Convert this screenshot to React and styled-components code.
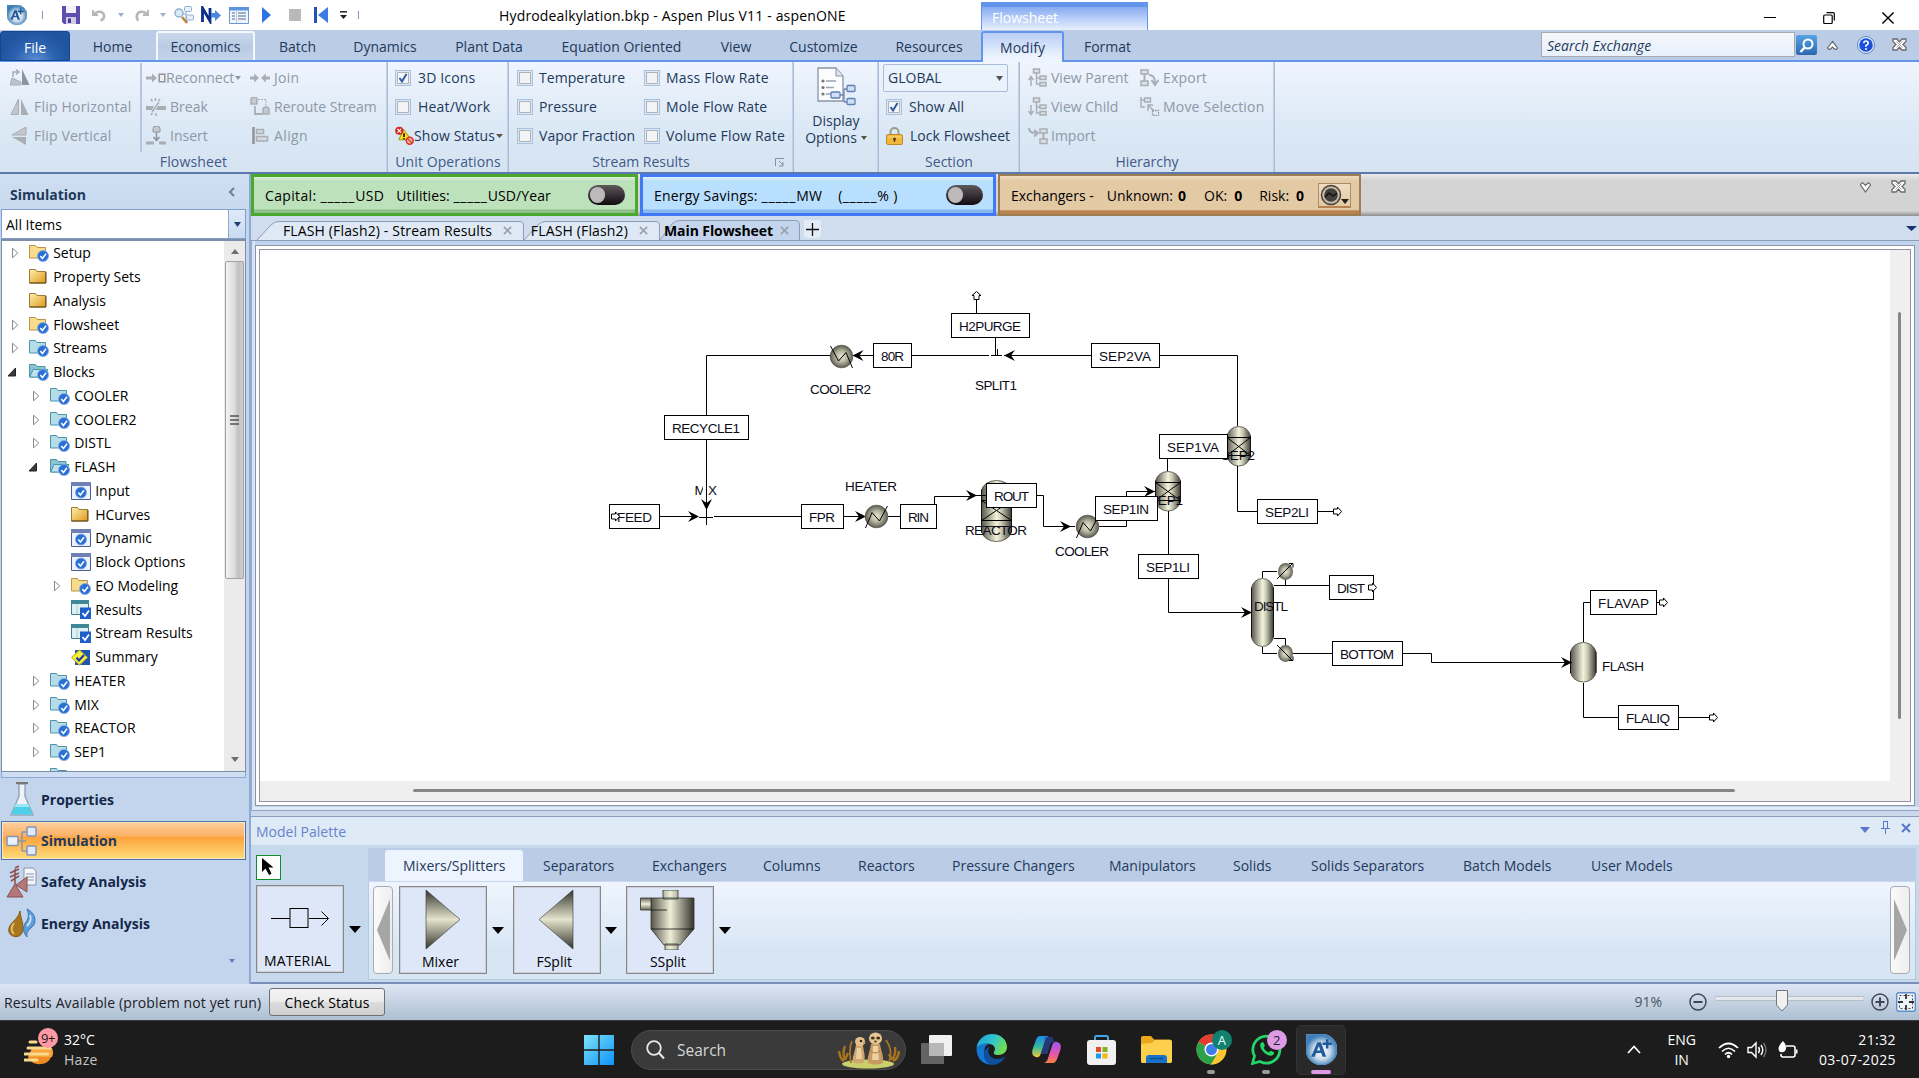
import React from "react";
import styled, { createGlobalStyle } from "styled-components";

const Global = createGlobalStyle`
  * { box-sizing: border-box; }
  body { margin: 0; background: #c3d5ed; overflow: hidden; }
  svg { display: block; flex: none; }
`;

const Window = styled.div`
  width: 1919px; height: 1078px; display: flex; flex-direction: column; overflow: hidden;
  font-family: "Open Sans", "Noto Sans", sans-serif; font-size: 14px; color: #000; white-space: nowrap;
  line-height: 20px;
`;
const Space = styled.div`flex: none; width: ${p => p.$w}px;`;
const Grow = styled.div`flex: 1;`;
const Label = styled.span`
  letter-spacing: ${p => p.$ls || 0}px;
  font-weight: ${p => (p.$bold ? 700 : 400)};
  color: ${p => p.$c || "inherit"};
`;

/* ---------- title bar ---------- */
const TitleBar = styled.div`height: 30px; background: #fff; display: flex; align-items: center; flex: none;`;
const QuickSlot = styled.div`width: ${p => p.$w}px; height: 30px; display: flex; align-items: center; flex: none;`;
const TitleText = styled.div`width: 482px; font-size: 14px; padding-top: 2px; letter-spacing: 0.16px;`;
const ContextTab = styled.div`
  width: 167px; height: 28px; align-self: flex-end; color: #fff; padding: 2px 0 0 10px;
  border-top: 5px solid #6495ed; border-left: 1px solid #6495ed; border-right: 1px solid #6495ed;
  background: linear-gradient(#87abf2, #e9f0fd); line-height: 18px; flex: none;
`;
const WinButton = styled.div`width: 59px; height: 30px; display: flex; align-items: center; justify-content: center; padding-top: 6px;`;

/* ---------- ribbon tabs ---------- */
const TabRow = styled.div`height: 32px; flex: none; background: #bbcde6; border-bottom: 2px solid #6495ed; display: flex; color: #1e395b;`;
const RibbonTab = styled.div`
  width: ${p => p.$w}px; height: 30px; margin-right: ${p => p.$mr || 0}px; flex: none;
  display: flex; align-items: center; justify-content: center; padding-top: 3px;
`;
const HoverTab = styled(RibbonTab)`
  margin-top: 1px; height: 29px; border: 2px solid #f4f7fb; border-bottom: 0; border-radius: 3px 3px 0 0;
  background: linear-gradient(#c9d7ea, #b9cbe4 50%, #c3d3ea); padding-top: 0;
`;
const FileTab = styled(RibbonTab)`
  margin-top: 1px; height: 30px; color: #fff; border: 1px solid #17468c; border-radius: 3px 3px 0 0;
  background: radial-gradient(ellipse at 50% 110%, #5f93d8 0, #2a61ae 45%, #1f549e 75%);
`;
const ActiveTab = styled(RibbonTab)`
  margin-top: 1px; height: 31px; border: 2px solid #6495ed; border-bottom: 0; border-radius: 3px 3px 0 0;
  background: linear-gradient(#b9cdf6, #eef4fd 85%); padding-top: 0; position: relative; z-index: 1;
`;
const SearchBox = styled.div`
  width: 254px; height: 25px; margin: 2px 1px 0 0; border: 1px solid #a9a9ab; background: linear-gradient(#f4f7fb, #e9f1fc);
  font-style: italic; padding: 3px 5px; color: #1e395b; flex: none;
`;
const SearchButton = styled.div`
  width: 21px; height: 20px; margin-top: 5px; background: linear-gradient(#56a4e4, #2c68ae); border-radius: 2px; flex: none;
  display: flex; align-items: center; justify-content: center;
`;
const TabRowIcon = styled.div`padding-top: 8px;`;

/* ---------- ribbon ---------- */
const Ribbon = styled.div`
  height: 112px; flex: none; display: flex; color: #1e395b;
  background: linear-gradient(#eff5fe, #dbe8f5 60%, #d6e3f1); border-bottom: 2px solid #5d78ab;
`;
const Group = styled.div`
  width: ${p => p.$w}px; height: 110px; flex: none; display: flex; flex-direction: column;
  border-right: 1px solid #a8bcda; box-shadow: inset -1px 0 #c3d1e5;
`;
const GroupBody = styled.div`height: 90px; display: flex; padding-top: 1px;`;
const GroupName = styled.div`
  height: 20px; line-height: 19px; color: #3e5a89; display: flex; justify-content: center; position: relative;
`;
const Column = styled.div`
  width: ${p => p.$w}px; display: flex; flex-direction: column; flex: none;
  padding-left: ${p => p.$pl || 0}px; color: ${p => (p.$dim ? "#8e98a6" : "#1e395b")};
  border-right: ${p => (p.$line ? "2px solid #b7c6de" : "0")}; letter-spacing: ${p => p.$ls || 0}px;
`;
const Command = styled.div`height: 29px; display: flex; align-items: center; gap: ${p => p.$gap ?? 4}px;`;
const CheckBox = styled.div`
  width: 16px; height: 16px; border: 1px solid #a9c0de; background: #dfe9f6; flex: none; padding: 1px;
  display: flex; > div { flex: 1; border: 1px solid #aeb3b9; background: #f1f3f5; }
`;
const SectionCombo = styled.div`
  width: 125px; height: 28px; border: 1px solid #abbdd6; background: #eaf2fb; display: flex; align-items: center;
  justify-content: space-between; padding: 0 4px 0 4px; margin: 1px 0 0 -3px; border-radius: 2px;
`;
const BigButton = styled.div`
  width: 86px; display: flex; flex-direction: column; align-items: center; padding-top: 4px; line-height: 17px;
`;
const BigLine = styled.div`display: flex; align-items: center; gap: 4px; margin-top: ${p => p.$mt || 0}px;`;
const Launcher = styled.div`position: absolute; right: 8px; top: 6px;`;

/* ---------- body ---------- */
const Body = styled.div`height: 810px; flex: none; display: flex;`;
const Side = styled.div`
  width: 251px; display: flex; flex-direction: column; background: #c3d5ed; border-right: 2px solid #8ea9d3; flex: none; padding-left: 1px;
`;
const SideTitle = styled.div`
  height: 35px; display: flex; align-items: center; justify-content: space-between; padding: 7px 13px 0 10px;
  background: linear-gradient(#cfdef1, #c9daf0); color: #1e395b; font-weight: 700; margin-left: -1px;
`;
const SideCombo = styled.div`
  width: 245px; height: 30px; border: 1px solid #7f9fce; background: #fff; display: flex; align-items: center; padding: 1px 0 0 4px;
`;
const ComboButton = styled.div`
  width: 17px; height: 28px; background: linear-gradient(#dfeaf7, #c9daf0); border-left: 1px solid #8ba8d2;
  display: flex; align-items: center; justify-content: center; margin: -1px 0 0 auto;
`;
const TreeBox = styled.div`
  width: 245px; height: 533px; border: 1px solid #7d8da8; border-top-width: 2px; background: #fff; display: flex; overflow: hidden;
`;
const TreeList = styled.div`flex: 1; padding-top: 0.5px;`;
const TreeRow = styled.div`
  height: 23.76px; display: flex; align-items: center; padding-left: ${p => 4 + p.$level * 21}px;
`;
const Twisty = styled.div`width: 23px; flex: none;`;
const TreeIcon = styled.div`width: 24.2px; flex: none;`;
const ScrollBar = styled.div`
  width: 21px; background: #ebebeb; display: flex; flex-direction: column; align-items: center; justify-content: space-between;
`;
const ScrollEnd = styled.div`height: ${p => p.$h}px; display: flex; align-items: center;`;
const ScrollThumb = styled.div`
  width: 19px; height: 318px; border: 1px solid #a0a0a0; border-radius: 2px; margin-bottom: auto;
  background: linear-gradient(90deg, #f4f4f4, #dcdcde 50%, #bfc0c4 70%, #d0d0d4); display: flex; align-items: center; justify-content: center;
`;
const Splitter = styled.div`height: 6px; width: 245px; border: 1px solid #8ba8d2; border-top: 0; background: #cfdff3; margin-bottom: 1px;`;
const NavItem = styled.div`
  width: 245px; height: ${p => p.$h}px; display: flex; align-items: center; font-weight: 700; color: #14284a; gap: 4px; padding-left: 5px;
`;
const NavActive = styled(NavItem)`
  border: 1px solid #4c72ab; box-shadow: inset 0 0 0 1px #fce5c5; color: #1e395b; padding-left: 4px;
  background: linear-gradient(#fdcf9f, #fcb064 38%, #fda33b 42%, #fedd7c);
`;
const NavFoot = styled.div`display: flex; justify-content: flex-end; padding: 15px 14px 0 0;`;

const Main = styled.div`flex: 1; display: flex; flex-direction: column; background: #cad9eb; min-width: 0;`;
const Dashboard = styled.div`
  height: 42px; display: flex; flex: none; background: linear-gradient(#ebebeb, #d4d4d4 15%, #d3d3d3 88%, #8d8d8d);
`;
const Meter = styled.div`
  width: ${p => p.$w}px; height: 42px; margin-right: ${p => p.$mr}px; border: ${p => p.$b}px solid ${p => p.$line};
  background: linear-gradient(${p => p.$top}, ${p => p.$fill} 12%, ${p => p.$fill} 88%, ${p => p.$low} 92%);
  display: flex; align-items: center; flex: none; > span { padding-top: 2px; }
`;
const Toggle = styled.div`
  width: 37px; height: 20px; border-radius: 10px; background: linear-gradient(#5d585c, #120b10); padding: 2px;
  &::before { content: ""; display: block; width: 15px; height: 16px; border-radius: 8px; background: #bdb9bb; }
`;
const ExchangerButton = styled.div`
  width: 33px; height: 25px; border: 1px solid #a98c68; border-bottom: 2px solid #b98350; display: flex; align-items: center;
  background: linear-gradient(#efdcc2, #e3c9a5);
`;
const DashIcons = styled.div`margin-left: auto; display: flex; gap: 19px; padding: 6px 13px 0 0;`;

const DocTabs = styled.div`
  height: 25px; background: #d0ddee; display: flex; align-items: flex-end; border-bottom: 1px solid #8d9db8; flex: none;
`;
const DocTab = styled.div`
  height: 20px; width: ${p => p.$w}px; display: flex; align-items: center; justify-content: flex-end; gap: ${p => (p.$active ? 7 : 11)}px; flex: none;
  position: relative; padding: 1px ${p => p.$pr}px 0 0; font-weight: ${p => (p.$active ? 700 : 400)};
  > svg:first-child { position: absolute; left: 0; top: 0; }
  > * { position: relative; }
`;
const AddTab = styled.div`
  width: 17px; height: 18px; margin: 0 0 2px 4px; border-radius: 3px; background: #e4edf7; display: flex; align-items: center; justify-content: center;
`;
const TabMenu = styled.div`padding: 0 2px 9px 0;`;
const DocFrame = styled.div`
  height: 570px; flex: none; background: #bfd5f0; border-bottom: 1px solid #8fa3c4; border-left: 1px solid #9aabc8;
  padding: 4px 4px 4px 3px; box-shadow: inset 0 -3px #dfeaf6, inset 3px 0 #d6e4f5;
`;
const DocEdge = styled.div`height: 561px; border: 1px solid #8d95a3; background: #fff; padding: 3px;`;
const Canvas = styled.div`
  height: 553px; border: 1px solid #8d95a3; background: #efefef; display: grid; grid-template-columns: 1630px 20px; grid-template-rows: 531px 20px;
`;
const Sheet = styled.div`background: #fff;`;
const VBar = styled.div`padding: 62px 0 0 8px; &::before { content: ""; display: block; width: 3px; height: 407px; background: #868686; border-radius: 2px; }`;
const HBar = styled.div`padding: 8px 0 0 153px; &::before { content: ""; display: block; width: 1322px; height: 3px; background: #868686; border-radius: 2px; }`;

/* ---------- palette ---------- */
const Palette = styled.div`
  flex: 1; margin-top: 5px; border-top: 1px solid #8d9db8; border-bottom: 2px solid #7890b8; background: #c6d8ec; display: flex; flex-direction: column;
`;
const PaletteHead = styled.div`
  height: 28px; background: #deeaf6; color: #6a83cc; display: flex; align-items: center; justify-content: space-between; padding: 2px 8px 0 5px;
`;
const PaletteTools = styled.div`display: flex; gap: 11px; padding-bottom: 9px; align-items: center;`;
const ToolDrop = styled.div`padding-top: 5px;`;
const PaletteBody = styled.div`display: flex; padding-top: 3px; flex: 1;`;
const PaletteLeft = styled.div`width: 117px; padding: 7px 0 0 5px; flex: none;`;
const CursorButton = styled.div`
  width: 25px; height: 25px; border: 1px solid #138a2c; background: #fdfdfd; display: flex; align-items: center; justify-content: center; margin-bottom: 5px;
`;
const PaletteRight = styled.div`width: 1548px; flex: none;`;
const PaletteTabs = styled.div`height: 33px; background: #bbcde6; display: flex; padding: 2px 0 0 17px; color: #1e395b;`;
const PaletteTab = styled.div`
  width: ${p => p.$w}px; height: 31px; padding: 6px 0 0 18px; margin-right: ${p => (p.$active ? 2 : 0)}px; flex: none;
  background: ${p => (p.$active ? "#eef4fd" : "none")}; border-radius: 3px 3px 0 0;
`;
const PalettePane = styled.div`
  height: 99px; border: 1px solid #b7c9de; border-top: 1px solid #c9d8ec; background: linear-gradient(#eff5fe, #d8e6f4 70%, #d8e5f3);
  display: flex; padding: 4px 5px 0 4px;
`;
const Unit = styled.div`display: flex; align-items: center; width: ${p => p.$w}px; height: 88px; flex: none;`;
const UnitBox = styled.div`
  width: 88px; height: 88px; border: 1px solid #85878c; box-shadow: inset 0 0 0 1px #cfd0d4; background: #dee7f8;
  display: flex; flex-direction: column; align-items: center; justify-content: space-between; padding: ${p => p.$pt ?? 4}px 5px 1px 0; flex: none;
`;
const Pager = styled.div`
  width: 20px; height: 88px; border: 1px solid #a7abb2; border-radius: 4px; background: linear-gradient(90deg, #fafafa, #eeeeee);
  display: flex; align-items: center; justify-content: center; margin-right: ${p => p.$mr || 0}px; margin-left: ${p => (p.$end ? "auto" : 0)}; flex: none;
`;

/* ---------- status bar + taskbar ---------- */
const Status = styled.div`
  height: 36px; flex: none; display: flex; align-items: center; background: linear-gradient(#dde6f4, #adbfd3); padding-left: 4px; color: #1b2027;
`;
const StatusText = styled.div`width: 265px; letter-spacing: 0.13px; padding-top: 1px;`;
const StatusButton = styled.div`
  width: 116px; height: 28px; border: 1px solid #707070; border-radius: 3px; background: linear-gradient(#f3f3f3, #ebebeb 50%, #dcdcdc 51%, #cfcfcf);
  text-align: center; line-height: 27px; color: #000; flex: none; letter-spacing: 0.1px;
`;
const Slider = styled.div`width: 149px; height: 24px; flex: none;`;
const Taskbar = styled.div`
  height: 58px; flex: none; background: #1c1c1c; border-top: 1px solid #3a3a3a; display: flex; color: #fff; align-items: center;
`;
const Weather = styled.div`display: flex; gap: 10px; padding-left: 24px; width: 584px; line-height: 20px; flex: none; small { font-size: 14px; letter-spacing: 0.3px; color: #c4c4c4; display: block; }`;
const SearchPill = styled.div`
  width: 275px; height: 40px; border-radius: 20px; background: #3a3a3a; border: 1px solid #4c4c4c; margin-left: 17px; padding: 0 5px 0 14px;
  display: flex; align-items: center; color: #d6d6d6; font-size: 15.5px; gap: 12px; flex: none;
`;
const TaskButton = styled.div`width: 55px; height: 56px; display: flex; align-items: center; justify-content: center; flex: none; position: relative;`;
const Badge = styled.div`
  position: absolute; left: ${p => p.$x}px; top: ${p => p.$y}px; width: 20px; height: 20px; border-radius: 50%; background: ${p => p.$bg};
  color: ${p => p.$fg}; font-size: 13px; line-height: 20px; text-align: center; letter-spacing: -0.5px;
`;
const Dot = styled.div`position: absolute; bottom: 4px; width: ${p => p.$w || 8}px; height: 4px; border-radius: 2px; background: ${p => p.$bg || "#9a9a9a"};`;
const ActiveTile = styled.div`
  width: 50px; height: 50px; border-radius: 5px; background: #292929; border: 1px solid #333; display: flex; align-items: center; justify-content: center;
`;
const Tray = styled.div`margin-left: auto; display: flex; align-items: center; padding-right: 23px; font-size: 14px;`;
const TwoLine = styled.div`text-align: ${p => p.$align}; line-height: 20px; letter-spacing: ${p => p.$ls || 0}px;`;
const Relative = styled.div`position: relative;`;

/* ---------- small drawings ---------- */
const Caret = ({ c = "#000", w = 8, h = 5 }) => (
  <svg width={w} height={h} viewBox="0 0 8 5" preserveAspectRatio="none"><path d="M0 0h8L4 5z" fill={c} /></svg>
);
const Cross = ({ c = "#9aa0a8", s = 9, k = 1.8 }) => (
  <svg width={s} height={s} viewBox="0 0 10 10"><path d="M1 1l8 8M9 1L1 9" stroke={c} strokeWidth={k} fill="none" /></svg>
);
const OutlinedX = () => (
  <svg width="15" height="13" viewBox="0 0 15 13">
    <path d="M1 1h4l2.500 2.800L10 1h4v2.500L11 6.500l3 3V12h-4L7.500 9.200 5 12H1V9.500l3-3-3-3z" fill="#fff" stroke="#6a6a6a" strokeWidth="1.300" />
    <path d="M4.500 3.500l6 6M10.500 3.500l-6 6" stroke="#8a8a8a" strokeWidth=".8" />
  </svg>
);
const AspenLogo = ({ s }) => (
  <svg width={s} height={s} viewBox="0 0 30 30">
    <defs><radialGradient id="asp" cx=".5" cy=".55"><stop offset="0" stopColor="#fff" /><stop offset=".55" stopColor="#c9d9ea" /><stop offset="1" stopColor="#3f7fb8" /></radialGradient></defs>
    <path d="M0 0h15A15 15 0 1 1 0 15z" fill="url(#asp)" stroke="#5c93c4" strokeWidth="1" />
    <path d="M5 22L11 8h3.500l5 14h-3.500l-1.200-3.500H9.700L8.500 22zM10.600 16h3.300l-1.500-4.500z" fill="#215a9c" fillRule="evenodd" />
    <path d="M20.500 5v9M16 9.500h9" stroke="#215a9c" strokeWidth="2.400" />
  </svg>
);
const quick = {
  save: <svg width="18" height="18" viewBox="0 0 18 18"><path d="M0 0h18v18H2l-2-2z" fill="#5d4fb0" /><path d="M4 0h10v7H4z" fill="#f2f0fa" /><path d="M4 11h10v7H4z" fill="#cfcbe6" /><path d="M6 12.500h3V17H6z" fill="#443a90" /></svg>,
  undo: <svg width="15" height="15" viewBox="0 0 15 15"><path d="M1 2v5h5" fill="none" stroke="#b5b9be" strokeWidth="2" /><path d="M2 6.500C5 2.500 11 3 12 7c.6 2.600-1 4.500-3.500 5.500" fill="none" stroke="#b5b9be" strokeWidth="2.600" /></svg>,
  redo: <svg width="15" height="15" viewBox="0 0 15 15"><path d="M14 2v5H9" fill="none" stroke="#b5b9be" strokeWidth="2" /><path d="M13 6.500C10 2.500 4 3 3 7c-.6 2.600 0 4.500 1.500 5.500" fill="none" stroke="#b5b9be" strokeWidth="2.600" /></svg>,
  find: <svg width="20" height="20" viewBox="0 0 20 20"><path d="M8 9h4M12 4v12M12 4h2M12 16h2" stroke="#8aa6c6" fill="none" /><rect x="10.500" y="1.500" width="7" height="5" rx="1" fill="#e8f1fa" stroke="#8fb0d2" /><rect x="12.500" y="10" width="7" height="5" rx="1" fill="#e8f1fa" stroke="#8fb0d2" /><circle cx="5" cy="8" r="4" fill="#dbeaf7" stroke="#8fb0d2" strokeWidth="1.500" /><path d="M8 12l5 6" stroke="#b8833c" strokeWidth="2.400" /></svg>,
  next: <svg width="20" height="18" viewBox="0 0 20 18"><path d="M1.500 16V2l7.500 13V2" fill="none" stroke="#0c2f8c" strokeWidth="2.800" /><path d="M10 7h4V4l6 5.500-6 5.500v-3.500h-4z" fill="#4a86e0" /></svg>,
  form: <svg width="20" height="17" viewBox="0 0 20 17"><path d="M.5.5h19v16H.5z" fill="#f0f5fb" stroke="#6e97cf" /><path d="M0 0h20v3.500H0z" fill="#5c92e0" /><path d="M3 6h3M3 9h3M3 12h3M9 6h8M9 9h8M9 12h8" stroke="#8499b5" strokeWidth="1.500" /><path d="M7.500 4v12" stroke="#b4c5dc" /></svg>,
  play: <svg width="9" height="16" viewBox="0 0 9 16"><path d="M0 0l9 8-9 8z" fill="#2e74e0" /></svg>,
  stop: <svg width="12" height="12" viewBox="0 0 12 12"><path d="M0 0h12v12H0z" fill="#b9b9b9" /></svg>,
  rewind: <svg width="14" height="16" viewBox="0 0 14 16"><path d="M0 0h3v16H0z" fill="#2452b4" /><path d="M14 0v16L4 8z" fill="#3c7be2" /></svg>,
  more: <svg width="7" height="9" viewBox="0 0 7 9"><path d="M0 .8h7" stroke="#222" strokeWidth="1.500" /><path d="M0 4h7L3.500 8z" fill="#222" /></svg>,
};
const G = "#a9aeb5", GD = "#8f959d";
const cmdIcon = {
  rotate: <svg width="20" height="17" viewBox="0 0 20 17"><path d="M12 0v16h7.500z" fill={GD} /><path d="M0 16h11v-3L2 9z" fill="#bfc4ca" stroke={G} /><path d="M3 8V3h5M6 .5L9 3 6 5.500" fill="none" stroke={G} strokeWidth="1.500" /></svg>,
  fliph: <svg width="20" height="16" viewBox="0 0 20 16"><path d="M8.500 0v15.500H1z" fill="#c3c7cc" stroke={G} /><path d="M11 0v16h7.500z" fill={G} /></svg>,
  flipv: <svg width="20" height="18" viewBox="0 0 20 18"><path d="M16 0v8H2z" fill="#c3c7cc" stroke={G} /><path d="M16 10v8L2 10z" fill={G} /></svg>,
  reconnect: <svg width="20" height="12" viewBox="0 0 20 12"><path d="M0 4.500h6V1.500L11 6l-5 4.500v-3H0z" fill={G} /><rect x="13.200" y="2.200" width="5.600" height="7.600" fill="#eee" stroke={GD} strokeWidth="1.500" /></svg>,
  brk: <svg width="20" height="18" viewBox="0 0 20 18"><path d="M0 8h8l-2 4H0zM12 8h8v4H9.500z" fill={G} /><path d="M6 14L13 4M5 1l1.500 2.500M9.500 0v3M14 1l-1.500 2M5 17l1.500-2M10 18v-3" stroke={G} strokeWidth="1.500" /></svg>,
  insert: <svg width="20" height="19" viewBox="0 0 20 19"><path d="M7 6V2.500a3.500 2.500 0 0 1 7 0V6z" fill="#c7cacf" stroke={GD} /><path d="M10.500 6v8M7.500 11l3 3.500 3-3.500" fill="none" stroke={GD} strokeWidth="1.500" /><path d="M0 15.500h8v3H0zM13 15.500h7v3h-7z" fill={G} /></svg>,
  join: <svg width="20" height="12" viewBox="0 0 20 12"><path d="M0 4.500h4V1.500L9 6l-5 4.500v-3H0zM20 4.500h-4V1.500L11 6l5 4.500v-3h4z" fill={G} /></svg>,
  reroute: <svg width="20" height="19" viewBox="0 0 20 19"><path d="M1 7V3a3 3 0 0 1 6 0v4zM13 17v-4a3 3 0 0 1 6 0v4z" fill="#c7cacf" stroke={G} strokeWidth="1.500" /><path d="M8 2.500h8v7" fill="none" stroke={G} strokeDasharray="2 1" /><path d="M5 9v8h7" fill="none" stroke={G} strokeWidth="1.800" /></svg>,
  align: <svg width="20" height="17" viewBox="0 0 20 17"><path d="M3.500 0v17" stroke={GD} strokeWidth="2.500" /><path d="M6.500 2.500h7v4h-7zM6.500 9.500h11v4.500h-11z" fill="#d5d8dc" stroke={G} strokeWidth="1.500" /></svg>,
  parent: <svg width="20" height="19" viewBox="0 0 20 19"><path d="M5.500 1h6v4h-6zM12 8h6v3.500h-6zM12 14.500h6V18h-6z" fill="#dcdfe3" stroke={G} strokeWidth="1.500" /><path d="M8.500 5v11H12M8.500 10H12M3 18V9M.5 12L3 8.500 5.500 12" fill="none" stroke={G} strokeWidth="1.500" /></svg>,
  child: <svg width="20" height="19" viewBox="0 0 20 19"><path d="M5.500 1h6v4h-6zM12 8h6v3.500h-6zM12 14.500h6V18h-6z" fill="#dcdfe3" stroke={G} strokeWidth="1.500" /><path d="M8.500 5v11H12M8.500 10H12M3 8v9M.5 14L3 17.500 5.500 14" fill="none" stroke={G} strokeWidth="1.500" /></svg>,
  imp: <svg width="20" height="18" viewBox="0 0 20 18"><path d="M12 2h7v4h-7zM12 12h7v4.500h-7z" fill="#dcdfe3" stroke={G} strokeWidth="1.500" /><path d="M15.500 6v6M1 1c0 4 3 5 7 5M6 3l4 3-4 3.500" fill="none" stroke={G} strokeWidth="2" /></svg>,
  exp: <svg width="20" height="18" viewBox="0 0 20 18"><path d="M1 1h7v4H1zM1 12h7v4.500H1z" fill="#dcdfe3" stroke={G} strokeWidth="1.500" /><path d="M4.500 5v7M9 6c5 0 6 3 6 8M11.500 11l3.500 5 3.500-5" fill="none" stroke={G} strokeWidth="2" /></svg>,
  move: <svg width="20" height="19" viewBox="0 0 20 19"><path d="M4.500 1h6v4h-6z" fill="#dcdfe3" stroke={G} strokeWidth="1.300" /><path d="M1 0v10h4M1 3h3M8 14V8h5M8 8l6 6" fill="none" stroke={G} strokeWidth="1.500" /><path d="M12.500 13.500h6v5h-6z" fill="none" stroke={GD} strokeDasharray="1.500 1" strokeWidth="1.300" /></svg>,
  status: <svg width="19" height="20" viewBox="0 0 20 20"><path d="M9 3l8 11H4z" fill="#f7e01c" stroke="#a08a00" /><path d="M9.500 7v4M9.500 12v1.500" stroke="#000" strokeWidth="1.600" /><circle cx="4.500" cy="4.500" r="4.300" fill="#d8231f" /><path d="M2.500 2.500l4 4M6.500 2.500l-4 4" stroke="#fff" strokeWidth="1.300" /><circle cx="15.500" cy="15" r="3.600" fill="#f6b8a8" stroke="#d8321f" strokeWidth="1.600" /><path d="M13 12.500l5 5" stroke="#d8321f" strokeWidth="1.400" /></svg>,
  lock: <svg width="17" height="18" viewBox="0 0 17 18"><path d="M4.500 8V5a4 4 0 0 1 8 0v3" fill="none" stroke="#9c9c8e" strokeWidth="2" /><rect x=".5" y="7.500" width="16" height="10" rx="1.500" fill="#f0b73a" stroke="#c08a2a" /><path d="M1.500 10h14" stroke="#fbdc8a" /><circle cx="8.500" cy="12" r="1.500" fill="#5a3d08" /><path d="M8.500 12v3" stroke="#5a3d08" strokeWidth="1.300" /></svg>,
  display: <svg width="39" height="39" viewBox="0 0 39 39"><path d="M1 1h18l7 8v25H1z" fill="#fbfcfe" stroke="#8a94a3" strokeWidth="1.300" /><path d="M19 1v8h7" fill="#dfe5ee" stroke="#8a94a3" /><circle cx="6" cy="14" r="1.600" fill="#777" /><circle cx="6" cy="20.500" r="1.600" fill="#777" /><circle cx="6" cy="27" r="1.600" fill="#777" /><path d="M9 14h10M9 20.500h8M9 27h5" stroke="#9ba3ae" strokeWidth="1.500" /><path d="M22 28h5M27 22v13M27 22h3M27 35h3" stroke="#7288a8" strokeWidth="1.300" fill="none" /><rect x="14" y="25" width="9" height="6" rx="1" fill="#cfe0f6" stroke="#5d7fb4" strokeWidth="1.300" /><rect x="30" y="18.500" width="8" height="6" rx="1" fill="#cfe0f6" stroke="#5d7fb4" strokeWidth="1.300" /><rect x="30" y="31.500" width="8" height="6" rx="1" fill="#cfe0f6" stroke="#5d7fb4" strokeWidth="1.300" /></svg>,
};
const Check = ({ on }) => (
  <CheckBox>{on ? <svg width="12" height="12" viewBox="0 0 12 12"><path d="M.5.5h11v11H.5z" fill="#f4f7fa" stroke="#aeb3b9" /><path d="M2.500 6l2.500 3.500L9.500 2" fill="none" stroke="#2f5aa0" strokeWidth="2" /></svg> : <div />}</CheckBox>
);

const Tick = ({ x = 14, y = 12 }) => (
  <g transform={`translate(${x} ${y})`}><circle r="5.500" fill="#2a6fd6" stroke="#7fa8e4" strokeWidth=".8" /><path d="M-2.700 0L-.6 2.500 3-2.300" fill="none" stroke="#fff" strokeWidth="1.500" /></g>
);
const treeIcons = {
  yc: <svg width="20" height="18" viewBox="0 0 20 18"><path d="M.5 1.500h6l1.500 2h8.500V14H.5z" fill="#f6dd8d" stroke="#b99647" /><Tick /></svg>,
  y: <svg width="20" height="18" viewBox="0 0 20 18"><defs><linearGradient id="fy" x2="1" y2="1"><stop offset="0" stopColor="#fdf0b0" /><stop offset="1" stopColor="#e0991c" /></linearGradient></defs><path d="M.5 1.500h6l1.500 2h8.500V15H.5z" fill="url(#fy)" stroke="#9c7c33" /><path d="M.5 15h16.500V4" fill="none" stroke="#5e4514" /></svg>,
  bc: <svg width="20" height="18" viewBox="0 0 20 18"><path d="M.5 1.500h6l1.500 2h8.500V14H.5z" fill="#b5dde8" stroke="#4d94ab" /><Tick /></svg>,
  bo: <svg width="20" height="18" viewBox="0 0 20 18"><path d="M.5 1.500h6l1.500 2h8V14H.5z" fill="#8cc3d4" stroke="#4d94ab" /><path d="M4 6.500h15L15 14H.8z" fill="#bfe3ec" stroke="#4d94ab" /><Tick /></svg>,
  f: <svg width="20" height="18" viewBox="0 0 20 18"><path d="M.5.500h19v17H.5z" fill="#eef1fb" stroke="#4a5f92" /><path d="M0 0h20v4H0z" fill="#6f80b4" /><Tick x={10} y={10.500} /></svg>,
  r: <svg width="20" height="19" viewBox="0 0 20 19"><path d="M.5.500h17v14H.5z" fill="#dff0f3" stroke="#3d8393" /><path d="M0 0h18v4H0z" fill="#3d8796" /><path d="M6 4v10" stroke="#a9ced6" /><path d="M9 7.500h11V19H9z" fill="#1e5fca" /><path d="M11.500 13l2.500 3 4-5.500" fill="none" stroke="#fff" strokeWidth="1.700" /></svg>,
  s: <svg width="20" height="17" viewBox="0 0 20 17"><path d="M4 1h15v15H4z" fill="#1f57b4" /><path d="M8.500 1l8 7.500-8 7.500-8-7.500z" fill="#f8ee3c" stroke="#b9a80e" /><path d="M5.500 8.500l2.500 3 5-5.500" fill="none" stroke="#1436b0" strokeWidth="2" /></svg>,
};
const TW = {
  closed: <svg width="18" height="14" viewBox="0 0 18 14"><path d="M6.500 2.200v9.600L11.800 7z" fill="#fff" stroke="#8a8a8a" /></svg>,
  open: <svg width="18" height="14" viewBox="0 0 18 14"><path d="M9.500 3v8H2z" fill="#3a3a3a" stroke="#222" /></svg>,
};
const tree = [
  [0, "closed", "yc", "Setup"], [0, "", "y", "Property Sets"], [0, "", "y", "Analysis"], [0, "closed", "yc", "Flowsheet"],
  [0, "closed", "bc", "Streams"], [0, "open", "bo", "Blocks"], [1, "closed", "bc", "COOLER"], [1, "closed", "bc", "COOLER2"],
  [1, "closed", "bc", "DISTL"], [1, "open", "bo", "FLASH"], [2, "", "f", "Input"], [2, "", "y", "HCurves"], [2, "", "f", "Dynamic"],
  [2, "", "f", "Block Options"], [2, "closed", "yc", "EO Modeling"], [2, "", "r", "Results"], [2, "", "r", "Stream Results"],
  [2, "", "s", "Summary"], [1, "closed", "bc", "HEATER"], [1, "closed", "bc", "MIX"], [1, "closed", "bc", "REACTOR"],
  [1, "closed", "bc", "SEP1"], [1, "", "bc", ""],
];
const navIcons = [
  <svg width="31" height="36" viewBox="0 0 31 36"><path d="M11 2h10M13 2v12L5 33h22L19 14V2" fill="#eef3f8" stroke="#9aa7b8" strokeWidth="1.500" /><path d="M9.500 22h13l4 10.500h-21z" fill="#4fd0ea" /><path d="M9.500 22h13l1 3h-15z" fill="#9be7f5" /><path d="M10 1h12" stroke="#777" strokeWidth="2" /></svg>,
  <svg width="31" height="32" viewBox="0 0 31 32"><path d="M12 16h8M16 7v19M16 7h5M16 26h5" stroke="#8d96a8" strokeWidth="1.500" fill="none" /><rect x="1" y="11.500" width="11" height="9" rx="1" fill="#e9f1fd" stroke="#8294b8" strokeWidth="1.500" /><rect x="21" y="2" width="9" height="9" rx="1" fill="#dfeafc" stroke="#8294b8" strokeWidth="1.500" /><rect x="21" y="21" width="9" height="9" rx="1" fill="#dfeafc" stroke="#8294b8" strokeWidth="1.500" /></svg>,
  <svg width="31" height="34" viewBox="0 0 31 34"><path d="M18 3h9l3 3v14H18z" fill="#f3f6fa" stroke="#8793a5" /><path d="M20 9h8M20 12h8M20 15h8" stroke="#8793a5" /><path d="M9 19L1 32h16zM10 20l11-8v15z" fill="#b57878" stroke="#8c4f4f" /><path d="M9 19V4M4 8l9-4M4 12l9-4M5 16l8-5M9 3l4-2" stroke="#8c4f4f" strokeWidth="1.500" fill="none" /></svg>,
  <svg width="31" height="34" viewBox="0 0 31 34"><path d="M14 4C15 14 19 19 16 26c-2 5-11 5-13-1C1 16 12 14 14 4z" fill="#a8771d" stroke="#86590d" /><path d="M8 16c-3 4-3 8 0 11" stroke="#e2bd6d" strokeWidth="2" fill="none" /><path d="M21 2c9 4 10 14 5 18-3 3-6 5-5 10-5-6-4-11-1-15 3-4 3-8 1-13z" fill="#5c9dda" stroke="#3c74b2" /><path d="M24 8c2 5 0 8-3 11" stroke="#cfe4f8" strokeWidth="1.800" fill="none" /></svg>,
];

/* ---------- flowsheet ---------- */
const FsText = styled.text`font-family: "Liberation Sans", Arial, sans-serif; font-size: 13.5px; fill: #0b0b18;`;
const Tag = ({ x, y, w, t, tw }) => (
  <g><rect x={x + 0.5} y={y + 0.5} width={w} height="24" fill="#fff" stroke="#000" /><FsText x={x + 8} y={y + 18} textLength={tw}>{t}</FsText></g>
);
const Tip = ({ x, y, r = 0 }) => <path transform={`translate(${x} ${y}) rotate(${r})`} d="M0 0L-11-5.500-7 0-11 5.500z" fill="#000" />;
const Port = ({ x, y, r = 0 }) => <path transform={`translate(${x} ${y}) rotate(${r})`} d="M.5-2.500h4v-2l4 4.500-4 4.500v-2h-4z" fill="#fff" stroke="#000" strokeWidth="1" />;
const Heat = ({ x, y, flip }) => (
  <g transform={`translate(${x} ${y})${flip ? " scale(-1 1)" : ""}`}><circle r="11.300" fill="url(#ball)" stroke="#55554a" strokeWidth=".8" />
    <path d="M-11 11.500L-4.500-4 3 4.500 11-10.500" fill="none" stroke="#000" /></g>
);
const Vessel = ({ x, y, w, h, cross }) => (
  <g><rect x={x} y={y} width={w} height={h} rx={w / 2} ry={11} fill="url(#tube)" stroke="#4a4a42" strokeWidth=".8" />
    <path d={`M${x} ${y + 9}V${y + h - 9}M${x + w} ${y + 9}V${y + h - 9}`} stroke="#111" />
    {cross && <path d={`M${x} ${y + cross[0]}h${w}M${x} ${y + cross[1]}h${w}M${x} ${y + cross[0]}L${x + w} ${y + cross[1]}M${x + w} ${y + cross[0]}L${x} ${y + cross[1]}`} stroke="#000" fill="none" />}</g>
);
const Flowsheet = () => (
  <svg width="1630" height="531" viewBox="260 250 1630 531">
    <defs>
      <radialGradient id="ball"><stop offset="0" stopColor="#e9e9d6" /><stop offset=".5" stopColor="#b4b4a0" /><stop offset="1" stopColor="#5c5c50" /></radialGradient>
      <linearGradient id="tube"><stop offset="0" stopColor="#55554b" /><stop offset=".5" stopColor="#f3f3dc" /><stop offset=".65" stopColor="#cfcfb9" /><stop offset="1" stopColor="#3c3c36" /></linearGradient>
    </defs>
    <FsText x="694.5" y="495">M</FsText><rect x="703" y="484" width="6" height="13" fill="#fff" /><FsText x="708" y="495">X</FsText>
    <Vessel x={981.5} y={480.500} w={30} h={61} cross={[20, 40]} />
    <path d="M981.500 526.500h30" stroke="#222" />
    <Vessel x={1155.500} y={471.500} w={25} h={39.500} cross={[11, 29]} />
    <Vessel x={1227} y={426.500} w={23.500} h={39.500} cross={[11, 29]} />
    <Vessel x={1251.500} y={578.500} w={22} h={68} />
    <Vessel x={1570.500} y={642.500} w={25.500} h={39.500} />
    <path fill="none" stroke="#000" d="M831 355.500H706.500V506M853 355.500H989M660 516.500H698M699 517.500H713M706.500 508V525M714 516.500H801M843 516.500H866M888 516.500H900M934.500 505V496.500H970L972 495.500H987M1037 495.500H1043.500V526.500H1075M1099 526.500H1126.500V491.500H1155M1167.500 459V471M1168.500 511V612.500H1250M991 355.500H1002M995.500 338V355M997.500 349V355M1004 355.500H1237.500V426M1237.500 466V511.500H1333M1262.500 578V571.500H1277M1285.500 579V585M1274 585.500H1330M1262.500 647V653.500H1277M1274 638.500H1285.500V645M1293 653.500H1431.500V662.500H1572M1583.500 642V602.500H1659M1583.500 683V717.500H1709M976.500 313V300" />
    <Tip x={706.500} y={510} r={90} /><Tip x={699} y={516.500} /><Tip x={866} y={516.500} /><Tip x={977} y={495.500} />
    <Tip x={1071} y={526.500} /><Tip x={1155} y={491.500} /><Tip x={1252} y={612.500} /><Tip x={1572} y={662.500} />
    <Tip x={1004} y={355.500} r={180} /><Tip x={852.500} y={355.500} r={180} />
    <Heat x={841.500} y={356.500} flip /><Heat x={876.500} y={516.500} /><Heat x={1087.500} y={526.500} />
    <ellipse cx="1285.500" cy="571.500" rx="7.500" ry="8.500" fill="url(#ball)" /><path d="M1277 579L1293 563M1289 563.500h4v4" stroke="#000" fill="none" />
    <ellipse cx="1285.500" cy="653.500" rx="7.500" ry="8.500" fill="url(#ball)" /><path d="M1277 645L1293 661M1289 660.500h4v-4" stroke="#000" fill="none" />
    <FsText x="1149" y="505" textLength="34">SEP1</FsText>
    <FsText x="1221" y="460" textLength="34">SEP2</FsText>
    <FsText x="965" y="535" textLength="62">REACTOR</FsText>
    <Tag x={951} y={313} w={78} t="H2PURGE" tw={62} /><Tag x={873} y={343} w={38} t="80R" tw={23} />
    <Tag x={664} y={415} w={84} t="RECYCLE1" tw={68} /><Tag x={609} y={504} w={50} t="FEED" tw={35} />
    <Tag x={801} y={504} w={42} t="FPR" tw={26} /><Tag x={900} y={504} w={36} t="RIN" tw={21} />
    <Tag x={986} y={483} w={50} t="ROUT" tw={35} /><Tag x={1091} y={343} w={68} t="SEP2VA" tw={52} />
    <Tag x={1159} y={434} w={68} t="SEP1VA" tw={52} /><Tag x={1095} y={496} w={62} t="SEP1IN" tw={46} />
    <Tag x={1257} y={499} w={60} t="SEP2LI" tw={44} /><Tag x={1138} y={554} w={60} t="SEP1LI" tw={44} />
    <Tag x={1329} y={575} w={44} t="DIST" tw={28} /><Tag x={1332} y={641} w={70} t="BOTTOM" tw={54} />
    <Tag x={1590} y={590} w={66} t="FLAVAP" tw={51} /><Tag x={1618} y={705} w={60} t="FLALIQ" tw={44} />
    <FsText x="810" y="394" textLength="61">COOLER2</FsText><FsText x="975" y="389.500" textLength="42">SPLIT1</FsText>
    <FsText x="845" y="490.500" textLength="52">HEATER</FsText><FsText x="1055" y="555.500" textLength="54">COOLER</FsText>
    <FsText x="1254" y="610.500" textLength="34">DISTL</FsText><FsText x="1602" y="670.500" textLength="42">FLASH</FsText>
    <Port x={611} y={516.500} /><Port x={976.500} y={300} r={-90} /><Port x={1333} y={511.500} /><Port x={1368} y={587.500} />
    <Port x={1659} y={602.500} /><Port x={1709} y={717.500} />
  </svg>
);

const unitIcons = {
  mixer: <svg width="70" height="60" viewBox="0 0 70 60"><path d="M20 0v59l34-29.500z" fill="url(#vert)" stroke="#333" strokeWidth=".6" /><defs><linearGradient id="vert" x2="0" y2="1"><stop offset="0" stopColor="#34342e" /><stop offset=".5" stopColor="#e4e4cc" /><stop offset="1" stopColor="#34342e" /></linearGradient></defs></svg>,
  fsplit: <svg width="70" height="60" viewBox="0 0 70 60"><path d="M54 0v59L20 29.500z" fill="url(#vert)" stroke="#333" strokeWidth=".6" /></svg>,
  ssplit: <svg width="70" height="60" viewBox="0 0 70 60"><path d="M30 0h15v9H30zM18 8h43v31L47 55H31L18 39zM32 54h13v6H32z" fill="url(#hor)" stroke="#33332c" strokeWidth=".8" /><path d="M7.500 8H18v12H7.500z" fill="url(#vert2)" stroke="#33332c" strokeWidth=".8" /><path d="M18 20h16M18 39h43" stroke="#111" strokeWidth=".8" /><defs><linearGradient id="hor"><stop offset="0" stopColor="#55554b" /><stop offset=".45" stopColor="#efefd8" /><stop offset="1" stopColor="#33332c" /></linearGradient><linearGradient id="vert2" x2="0" y2="1"><stop offset="0" stopColor="#66665b" /><stop offset=".5" stopColor="#efefd8" /><stop offset="1" stopColor="#66665b" /></linearGradient></defs></svg>,
  material: <svg width="70" height="60" viewBox="0 0 70 60"><path d="M8 28.500h19M46 28.500h19M58.500 21.500l7 7-7 7" fill="none" stroke="#000" /><rect x="27" y="18.500" width="18" height="19" fill="none" stroke="#000" /></svg>,
};

const DocShape = ({ w, active, fill }) => (
  <svg width={w} height="20" viewBox={`0 0 ${w} 20`}><path d={active ? `M0 20L12 4Q15 .5 20 .5H${w - 4}Q${w - 0.5} .5 ${w - 0.5} 4V20` : `M0 20L14 5Q17 1.500 22 1.500H${w - 4}Q${w - 0.5} 1.500 ${w - 0.5} 5V20`} fill={fill} stroke="#8d9db8" /></svg>
);

const paletteTabs = [["Mixers/Splitters", 138], ["Separators", 109], ["Exchangers", 111], ["Columns", 95], ["Reactors", 94], ["Pressure Changers", 157], ["Manipulators", 124], ["Solids", 78], ["Solids Separators", 152], ["Batch Models", 128], ["User Models", 120]];

const TaskIcon = {
  win: <svg width="30" height="30" viewBox="0 0 30 30"><defs><linearGradient id="wg" x2="1" y2="1"><stop offset="0" stopColor="#7fe3fb" /><stop offset="1" stopColor="#0d92f5" /></linearGradient></defs><path d="M0 0h14.300v14.300H0zM15.700 0H30v14.300H15.700zM0 15.700h14.300V30H0zM15.700 15.700H30V30H15.700z" fill="url(#wg)" /></svg>,
  view: <svg width="31" height="29" viewBox="0 0 31 29"><rect x="8" width="23" height="21" rx="1" fill="#f0f0f0" /><rect y="8" width="23" height="21" rx="1" fill="#6d6d6d" opacity=".9" /><path d="M8 8h15v13H8z" fill="#b8b8b8" /></svg>,
  edge: <svg width="31" height="31" viewBox="0 0 31 31"><defs><linearGradient id="eg" x2="1" y2=".4"><stop offset="0" stopColor="#1b9de2" /><stop offset=".6" stopColor="#33c6c9" /><stop offset="1" stopColor="#6fdc58" /></linearGradient></defs><path d="M.5 15C1 6 8 0 16 0c9 0 15 6 15 13 0 5-4 8-9 8-3 0-5-1-4-3 2-3 1-7-4-8C8 9 2 11 .5 15z" fill="url(#eg)" /><path d="M.5 15C3 10 9 8.500 14 10c-4 0-6 4-5.500 8C9.500 25 16 29 22 28c-6 5-21 3-21.500-13z" fill="#1477d1" /><path d="M14 12c-4 5-1 12 6 13 4 .5 7-1 9.500-3C27 28 21 31 16 31 9 29 6 22 9 16z" fill="#0f4f9e" /></svg>,
  copilot: <svg width="29" height="27" viewBox="0 0 29 27"><defs><linearGradient id="cp1" x2="0" y2="1"><stop offset="0" stopColor="#1a8ce8" /><stop offset=".5" stopColor="#33b8a0" /><stop offset="1" stopColor="#f3cc3a" /></linearGradient><linearGradient id="cp2" x2="0" y2="1"><stop offset="0" stopColor="#9a58f0" /><stop offset=".6" stopColor="#e857a8" /><stop offset="1" stopColor="#f7813a" /></linearGradient></defs><path d="M8 0h9c-3 1-4 4-5 8l-3 9c-1 4-3 5-5 4-5-1-4-6-3-9L4 4c.6-2 2-4 4-4z" fill="url(#cp1)" /><path d="M21 27h-9c3-1 4-4 5-8l3-9c1-4 3-5 5-4 5 1 4 6 3 9l-3 8c-.6 2-2 4-4 4z" fill="url(#cp2)" /><path d="M13 1h6c1.500 0 2.500 1 3 5-3 0-3.500 2-4.500 5l-2 7H9l3-10c.5-3 .5-5 1-7z" fill="#2c4fb8" opacity=".6" /></svg>,
  store: <svg width="29" height="30" viewBox="0 0 29 30"><path d="M8 8V2.500Q8 1 9.500 1h10Q21 1 21 2.500V8" fill="none" stroke="#3fa9e8" strokeWidth="2" /><rect y="5" width="29" height="25" rx="3" fill="#f1f1f1" /><path d="M9 12h5v5H9z" fill="#e64b25" /><path d="M15.500 12h5v5h-5z" fill="#7cb518" /><path d="M9 18.500h5v5H9z" fill="#1f9be8" /><path d="M15.500 18.500h5v5h-5z" fill="#f8b70f" /></svg>,
  files: <svg width="31" height="27" viewBox="0 0 31 27"><path d="M0 2Q0 0 2 0h8l3 3.500h16Q31 3.500 31 6v19q0 2-2 2H2q-2 0-2-2z" fill="#e9a91c" /><path d="M0 8L11 7l3-3h15q2 0 2 2v19q0 2-2 2H2q-2 0-2-2z" fill="#fccf4c" /><path d="M5 27v-5q0-3 3-3h15q3 0 3 3v5z" fill="#1673c8" /><path d="M9 22.500h13" stroke="#0c4d92" strokeWidth="1.500" /></svg>,
  chrome: <svg width="31" height="31" viewBox="0 0 31 31"><circle cx="15.500" cy="15.500" r="15" fill="#fbc62f" /><path d="M15.500 15.500L2.500 8A15 15 0 0 1 28.500 8z" fill="#e23d30" /><path d="M15.500 15.500L2.500 8A15 15 0 0 0 15 30.500L22 19z" fill="#2ba24c" /><path d="M15.500 8.500h13A15 15 0 0 1 15 30.500l6.500-11z" fill="#fbc62f" /><circle cx="15.500" cy="15.500" r="7" fill="#fff" /><circle cx="15.500" cy="15.500" r="5.500" fill="#3f7de8" /></svg>,
  whats: <svg width="31" height="31" viewBox="0 0 31 31"><path d="M1.500 29.500l2-7.500A13.500 13.500 0 1 1 9 27.500z" fill="#1c1c1c" stroke="#25d366" strokeWidth="2.800" /><path d="M10.500 8.500c1-1 2-.5 2.500 1l.8 2c.3 1-1.300 1.500-1 2.500 1 2 2.500 3.500 4.700 4.300 1 .2 1.500-1.800 2.500-1.500l2.500 1.200c1 .5.800 2-.5 3-4 3-13-4-12.800-10 0-1 .5-2 1.300-2.500z" fill="#25d366" /></svg>,
  meerkats: <svg width="62" height="38" viewBox="0 0 62 38"><ellipse cx="30" cy="33" rx="26" ry="4.500" fill="#c9cf6b" /><path d="M13 32C11 20 12 14 14 10M51 31c3-8 2-15-3-22" stroke="#a8742e" strokeWidth="1.800" fill="none" /><path d="M1 20q1 8 5 10M7 15q-3 8 0 14M10 22l-3 7M57 16q1 8-3 13M61 20q-1 8-6 10M51 23l3 6" stroke="#a8731c" strokeWidth="2.400" fill="none" /><path d="M15 31c-1-6 2-9 3-18h7c0 7 3 11 1 18q-5 3-11 0z" fill="#d2a76c" /><path d="M19 17h4l1 11h-6z" fill="#ead0a2" /><ellipse cx="22" cy="10.500" rx="5" ry="4.500" fill="#e3c08c" /><path d="M25 11l3 1-3 2z" fill="#c99b5f" /><circle cx="23" cy="10" r="1.300" fill="#3a2a18" /><path d="M30 32c-1-7 2-11 3-19h9c1 7 4 12 3 19q-7 3-15 0z" fill="#c89a60" /><path d="M35 15h5l1 14h-7z" fill="#ead0a2" /><ellipse cx="37.500" cy="7.500" rx="6.500" ry="6" fill="#e6c693" /><ellipse cx="34.800" cy="7" rx="2" ry="1.600" fill="#4a321b" /><ellipse cx="40.200" cy="7" rx="2" ry="1.600" fill="#4a321b" /><path d="M36.500 10.500h2" stroke="#2a1a0c" strokeWidth="1.600" /><path d="M33 20q4 4 9 0" stroke="#a87842" fill="none" /></svg>,
};

export default function App() {
  return (
    <Window>
      <Global />
      <TitleBar>
        <Space $w={7} /><QuickSlot $w={35}><AspenLogo s={20} /></QuickSlot>
        <QuickSlot $w={20}><svg width="1" height="8"><path d="M.5 0v8" stroke="#7d9cc4" /></svg></QuickSlot>
        <QuickSlot $w={30}>{quick.save}</QuickSlot><QuickSlot $w={26}>{quick.undo}</QuickSlot><QuickSlot $w={16}><Caret c="#9fb0c4" w={6} h={4} /></QuickSlot>
        <QuickSlot $w={26}>{quick.redo}</QuickSlot><QuickSlot $w={14}><Caret c="#9fb0c4" w={6} h={4} /></QuickSlot>
        <QuickSlot $w={27}>{quick.find}</QuickSlot><QuickSlot $w={28}>{quick.next}</QuickSlot><QuickSlot $w={33}>{quick.form}</QuickSlot>
        <QuickSlot $w={27}>{quick.play}</QuickSlot><QuickSlot $w={25}>{quick.stop}</QuickSlot><QuickSlot $w={26}>{quick.rewind}</QuickSlot>
        <QuickSlot $w={18}>{quick.more}</QuickSlot><QuickSlot $w={141}><svg width="1" height="8"><path d="M.5 0v8" stroke="#7d9cc4" /></svg></QuickSlot>
        <TitleText>Hydrodealkylation.bkp - Aspen Plus V11 - aspenONE</TitleText>
        <ContextTab>Flowsheet</ContextTab>
        <Grow />
        <WinButton><svg width="13" height="12"><path d="M1 5.500h12" stroke="#000" /></svg></WinButton>
        <WinButton><svg width="12" height="12"><rect x=".7" y="3" width="8.500" height="8.500" rx="1" fill="none" stroke="#000" strokeWidth="1.200" /><path d="M3.500 .7H10q1.300 0 1.300 1.300v6.500" fill="none" stroke="#000" strokeWidth="1.200" /></svg></WinButton>
        <WinButton><Cross c="#000" s={14} k={1} /></WinButton>
        <Space $w={2} />
      </TitleBar>
      <TabRow>
        <FileTab $w={70}>File</FileTab><RibbonTab $w={85} $mr={1}>Home</RibbonTab><HoverTab $w={99} $mr={7}>Economics</HoverTab>
        <RibbonTab $w={71}>Batch</RibbonTab><RibbonTab $w={104}>Dynamics</RibbonTab><RibbonTab $w={104}>Plant Data</RibbonTab>
        <RibbonTab $w={161}>Equation Oriented</RibbonTab><RibbonTab $w={68}>View</RibbonTab><RibbonTab $w={107}>Customize</RibbonTab>
        <RibbonTab $w={104}>Resources</RibbonTab><ActiveTab $w={83}>Modify</ActiveTab><RibbonTab $w={87}>Format</RibbonTab>
        <Grow />
        <SearchBox>Search Exchange</SearchBox>
        <SearchButton><svg width="15" height="15"><circle cx="9" cy="6" r="4.500" fill="none" stroke="#fff" strokeWidth="2" /><path d="M6 9l-4.500 5" stroke="#fff" strokeWidth="2.500" /></svg></SearchButton>
        <Space $w={9} />
        <svg width="13" height="30"><path d="M1.500 18L6.500 11.500 11.500 18Q10 20.500 8 18.500L6.500 17 5 18.500Q3 20.500 1.500 18z" fill="#fff" stroke="#666" strokeWidth="1.200" /></svg>
        <Space $w={17} />
        <svg width="20" height="30"><circle cx="10" cy="15" r="8.500" fill="#e3ecfa" stroke="#5f86c8" /><circle cx="10" cy="15" r="6.800" fill="#1c50dc" /><path d="M7.700 13.200Q8 11 10 11t2.200 2Q12.200 14.500 10 15.500v1.300" fill="none" stroke="#fff" strokeWidth="1.700" /><circle cx="10" cy="19" r="1" fill="#fff" /></svg>
        <Space $w={16} /><TabRowIcon><OutlinedX /></TabRowIcon><Space $w={12} />
      </TabRow>

      <Ribbon>
        <Group $w={388}>
          <GroupBody>
            <Column $w={142} $pl={10} $dim $line $ls={0.2}>
              <Command>{cmdIcon.rotate}Rotate</Command><Command>{cmdIcon.fliph}Flip Horizontal</Command><Command>{cmdIcon.flipv}Flip Vertical</Command>
            </Column>
            <Column $w={104} $pl={4} $dim>
              <Command $gap={0}>{cmdIcon.reconnect}Reconnect<Space $w={1} /><Caret c="#8e98a6" w={6} h={4} /></Command>
              <Command>{cmdIcon.brk}Break</Command><Command>{cmdIcon.insert}Insert</Command>
            </Column>
            <Column $w={138} $pl={4} $dim>
              <Command>{cmdIcon.join}<Label $ls={0.3}>Join</Label></Command><Command>{cmdIcon.reroute}Reroute Stream</Command><Command>{cmdIcon.align}<Label $ls={0.4}>Align</Label></Command>
            </Column>
          </GroupBody>
          <GroupName><Label $ls={0.15}>Flowsheet</Label></GroupName>
        </Group>
        <Group $w={121}>
          <GroupBody>
            <Column $w={120} $pl={7}>
              <Command $gap={7}><Check on /><Label $ls={0.15}>3D Icons</Label></Command><Command $gap={7}><Check /><Label $ls={0.2}>Heat/Work</Label></Command>
              <Command $gap={0}>{cmdIcon.status}<Label $ls={0.1}>Show Status</Label><Space $w={1} /><Caret c="#5a5540" w={7} h={4} /></Command>
            </Column>
          </GroupBody>
          <GroupName><Label $ls={0.1}>Unit Operations</Label></GroupName>
        </Group>
        <Group $w={285}>
          <GroupBody>
            <Column $w={127} $pl={8} $ls={0.05}>
              <Command $gap={6}><Check />Temperature</Command><Command $gap={6}><Check />Pressure</Command><Command $gap={6}><Check />Vapor Fraction</Command>
            </Column>
            <Column $w={150} $pl={8} $ls={0.17}>
              <Command $gap={6}><Check />Mass Flow Rate</Command><Command $gap={6}><Check />Mole Flow Rate</Command><Command $gap={6}><Check />Volume Flow Rate</Command>
            </Column>
          </GroupBody>
          <GroupName>Stream Results<Space $w={20} /><Launcher><svg width="10" height="9"><path d="M.5 8V.5H9M4 3l4 4M8 4v4H4" fill="none" stroke="#8290a6" /></svg></Launcher></GroupName>
        </Group>
        <Group $w={85}>
          <GroupBody><BigButton>{cmdIcon.display}<BigLine $mt={6}>Display</BigLine><BigLine>Options<Caret c="#5a5540" w={6} h={4} /></BigLine></BigButton></GroupBody>
        </Group>
        <Group $w={141}>
          <GroupBody>
            <Column $w={140} $pl={7}>
              <SectionCombo>GLOBAL<Caret c="#555" w={7} h={5} /></SectionCombo>
              <Command $gap={7}><Check on />Show All</Command><Command $gap={7}>{cmdIcon.lock}<Label $ls={0.05}>Lock Flowsheet</Label></Command>
            </Column>
          </GroupBody>
          <GroupName>Section</GroupName>
        </Group>
        <Group $w={255}>
          <GroupBody>
            <Column $w={112} $pl={8} $dim>
              <Command $gap={3}>{cmdIcon.parent}View Parent</Command><Command $gap={3}>{cmdIcon.child}View Child</Command><Command $gap={3}>{cmdIcon.imp}Import</Command>
            </Column>
            <Column $w={140} $pl={8} $dim $ls={0.2}>
              <Command $gap={3}>{cmdIcon.exp}Export</Command><Command $gap={3}>{cmdIcon.move}Move Selection</Command>
            </Column>
          </GroupBody>
          <GroupName>Hierarchy</GroupName>
        </Group>
      </Ribbon>

      <Body>
        <Side>
          <SideTitle>Simulation<svg width="8" height="20" viewBox="0 0 8 20"><path d="M6 3L2 7l4 4" fill="none" stroke="#75809a" strokeWidth="2.200" /></svg></SideTitle>
          <SideCombo>All Items<ComboButton><Caret c="#1e3f73" w={7} h={5} /></ComboButton></SideCombo>
          <TreeBox>
            <TreeList>
              {tree.map(([lv, tw, ic, t], i) => (
                <TreeRow key={i} $level={lv}><Twisty>{TW[tw]}</Twisty><TreeIcon>{treeIcons[ic]}</TreeIcon>{t}</TreeRow>
              ))}
            </TreeList>
            <ScrollBar>
              <ScrollEnd $h={20}><svg width="8" height="5"><path d="M0 5h8L4 0z" fill="#6e6e6e" /></svg></ScrollEnd>
              <ScrollThumb><svg width="9" height="10"><path d="M0 1h9M0 5h9M0 9h9" stroke="#555" strokeWidth="1.600" /></svg></ScrollThumb>
              <ScrollEnd $h={24}><Caret c="#6e6e6e" /></ScrollEnd>
            </ScrollBar>
          </TreeBox>
          <Splitter />
          <NavItem $h={42}>{navIcons[0]}Properties</NavItem>
          <NavActive $h={39}>{navIcons[1]}Simulation</NavActive>
          <NavItem $h={43}>{navIcons[2]}Safety Analysis</NavItem>
          <NavItem $h={41}>{navIcons[3]}Energy Analysis</NavItem>
          <NavFoot><Caret c="#5b7db5" w={6} h={4} /></NavFoot>
        </Side>

        <Main>
          <Dashboard>
            <Meter $w={387} $mr={2} $b={3} $line="#4aa92c" $top="#dcefdc" $fill="#bde1bb" $low="#8fbf8c">
              <Space $w={11} /><Label $ls={0.35}>Capital:&nbsp;<Label $ls={0.8}>_____</Label>USD</Label><Space $w={12} /><Label $ls={0.1}>Utilities:&nbsp;<Label $ls={0.7}>_____</Label>USD/Year</Label><Grow /><Toggle /><Space $w={10} />
            </Meter>
            <Meter $w={356} $mr={2} $b={3} $line="#4178f6" $top="#def1ff" $fill="#b9dffe" $low="#86b8ee">
              <Space $w={11} /><Label $ls={0.2}>Energy Savings:&nbsp;<Label $ls={0.8}>_____</Label>MW</Label><Space $w={16} /><Label $ls={0.4}>(<Label $ls={0.8}>_____</Label>%&nbsp;)</Label><Grow /><Toggle /><Space $w={10} />
            </Meter>
            <Meter $w={363} $mr={0} $b={2} $line="#9b7d55" $top="#efdcc2" $fill="#e4c9a5" $low="#b98350">
              <Space $w={11} /><Label>Exchangers -</Label><Space $w={13} /><Label>Unknown:</Label><Space $w={5} /><Label $bold>0</Label>
              <Space $w={18} /><Label>OK:</Label><Space $w={7} /><Label $bold>0</Label><Space $w={17} /><Label>Risk:</Label><Space $w={7} /><Label $bold>0</Label><Grow />
              <ExchangerButton><svg width="31" height="22"><circle cx="12" cy="11" r="9.500" fill="#c9bda8" stroke="#4a4238" strokeWidth="1.500" /><circle cx="12" cy="11" r="6.800" fill="#43413e" /><path d="M6 13l4-4 4 3 4-3" stroke="#111" strokeWidth="1.500" fill="none" /><path d="M22 15h8l-4 5z" fill="#222" /></svg></ExchangerButton><Space $w={8} />
            </Meter>
            <DashIcons><svg width="13" height="14"><path d="M1.500 5Q3 1.500 5 4L6.500 5.500 8 4Q10 1.500 11.500 5L6.500 12z" fill="#fff" stroke="#666" strokeWidth="1.200" /></svg><OutlinedX /></DashIcons>
          </Dashboard>
          <DocTabs>
            <Space $w={6} />
            <DocTab $w={267} $pr={12}><DocShape w={267} fill="#dfe9f5" /><Label $ls={0.15}>FLASH (Flash2) - Stream Results</Label><Cross /></DocTab>
            <DocTab $w={136} $pr={12}><DocShape w={136} fill="#dfe9f5" /><Label $ls={0.15}>FLASH (Flash2)</Label><Cross /></DocTab>
            <DocTab $w={140} $pr={11} $active><DocShape w={140} active fill="#c3d4ec" /><Label $bold $ls={-0.08}>Main Flowsheet</Label><Cross /></DocTab>
            <AddTab><svg width="13" height="13"><path d="M6.500 0v13M0 6.500h13" stroke="#111" strokeWidth="1.300" /></svg></AddTab>
            <Grow /><TabMenu><Caret c="#15336e" w={11} h={5} /></TabMenu>
          </DocTabs>
          <DocFrame><DocEdge><Canvas>
            <Sheet><Flowsheet /></Sheet><VBar /><HBar />
          </Canvas></DocEdge></DocFrame>

          <Palette>
            <PaletteHead>Model Palette
              <PaletteTools><ToolDrop><Caret c="#5a78cc" w={10} h={6} /></ToolDrop>
                <svg width="9" height="13"><path d="M2.500 0v7M6.500 0v7M2 .5h5M0 7.500h9M4.500 8v5" fill="none" stroke="#5a78cc" /></svg><Cross c="#5a78cc" s={10} k={2} /></PaletteTools>
            </PaletteHead>
            <PaletteBody>
              <PaletteLeft>
                <CursorButton><svg width="17" height="19" viewBox="0 0 17 19"><path d="M2 0v14l3.500-3.500L9 17l2.500-1.200L8.500 9.500h5z" fill="#000" /></svg></CursorButton>
                <Unit $w={114}><UnitBox>{unitIcons.material}<Label $ls={0.2}>MATERIAL</Label></UnitBox><Space $w={5} /><Caret w={12} h={7} /></Unit>
              </PaletteLeft>
              <PaletteRight>
                <PaletteTabs>{paletteTabs.map(([t, w], i) => <PaletteTab key={t} $w={w} $active={i === 0}>{t}</PaletteTab>)}</PaletteTabs>
                <PalettePane>
                  <Pager $mr={6}><svg width="13" height="62"><path d="M13 0v62L0 31z" fill="#a6a6a6" /></svg></Pager>
                  {[["mixer", "Mixer"], ["fsplit", "FSplit"], ["ssplit", "SSplit"]].map(([k, t]) => (
                    <Unit key={k} $w={113.7}><UnitBox $pt={3}>{unitIcons[k]}<Label>{t}</Label></UnitBox><Space $w={4.5} /><Caret w={12} h={7} /></Unit>
                  ))}
                  <Pager $end><svg width="13" height="62"><path d="M0 0v62l13-31z" fill="#a6a6a6" /></svg></Pager>
                </PalettePane>
              </PaletteRight>
            </PaletteBody>
          </Palette>
        </Main>
      </Body>

      <Status>
        <StatusText>Results Available (problem not yet run)</StatusText>
        <StatusButton>Check Status</StatusButton><Grow />
        <Label $c="#4a5563">91%</Label><Space $w={27} />
        <svg width="18" height="18"><circle cx="9" cy="9" r="8" fill="none" stroke="#3d4652" strokeWidth="1.400" /><path d="M4.500 9h9" stroke="#3d4652" strokeWidth="2" /></svg>
        <Space $w={8} />
        <Slider><svg width="149" height="24"><rect y="6.500" width="149" height="4" rx="1" fill="#e4e8ec" stroke="#a9b0b8" strokeWidth=".7" /><path d="M61.500 .5h11v14.500l-5.500 6-5.500-6z" fill="#f1f1f1" stroke="#72777d" /></svg></Slider>
        <Space $w={7} />
        <svg width="18" height="18"><circle cx="9" cy="9" r="8" fill="none" stroke="#3d4652" strokeWidth="1.400" /><path d="M4.500 9h9M9 4.500v9" stroke="#3d4652" strokeWidth="2" /></svg>
        <Space $w={7} />
        <svg width="20" height="20"><rect x=".7" y=".7" width="18.600" height="18.600" rx="2" fill="#eef3f9" stroke="#5d8fcc" strokeWidth="1.400" /><path d="M3.500 3.500h13v13h-13z" fill="none" stroke="#444" strokeDasharray="2 2" /><path d="M10 2v5M10 13v5M2 10h5M13 10h5" stroke="#333" strokeWidth="1.800" /></svg>
        <Space $w={3} />
      </Status>

      <Taskbar>
        <Weather>
          <Relative>
            <svg width="30" height="36" viewBox="0 0 30 36"><path d="M4 27h23a12 10 0 0 1-22 2z" fill="#f08c22" /><path d="M28 18a13 12 0 0 1 0 9H4l4-9z" fill="#f5a53a" /><path d="M6 12h6M4 18h22M1 24h14M17 24h7M1 30h12" stroke="#f7d98c" strokeWidth="3" strokeLinecap="round" /></svg>
            <Badge $x={14} $y={-2} $bg="#ff99a4" $fg="#1a1a1a">9+</Badge>
          </Relative>
          <TwoLine $align="left">32°C<small>Haze</small></TwoLine>
        </Weather>
        {TaskIcon.win}
        <SearchPill><svg width="19" height="20"><circle cx="8" cy="8" r="6.800" fill="none" stroke="#e8e8e8" strokeWidth="1.800" /><path d="M13 13l5 5.500" stroke="#e8e8e8" strokeWidth="2" /></svg>Search<Grow />{TaskIcon.meerkats}</SearchPill>
        <Space $w={2.5} />
        <TaskButton>{TaskIcon.view}</TaskButton><TaskButton>{TaskIcon.edge}</TaskButton><TaskButton>{TaskIcon.copilot}</TaskButton>
        <TaskButton>{TaskIcon.store}</TaskButton><TaskButton>{TaskIcon.files}</TaskButton>
        <TaskButton>{TaskIcon.chrome}<Badge $x={28} $y={8} $bg="#12806f" $fg="#e8fff8">A</Badge><Dot /></TaskButton>
        <TaskButton>{TaskIcon.whats}<Badge $x={28} $y={8} $bg="#dc9be4" $fg="#222">2</Badge><Dot /></TaskButton>
        <TaskButton><ActiveTile><AspenLogo s={31} /></ActiveTile><Dot $w={20} $bg="#dc9be4" /></TaskButton>
        <Tray>
          <svg width="14" height="9"><path d="M1 8l6-6.500L13 8" fill="none" stroke="#fff" strokeWidth="1.700" /></svg><Space $w={26} />
          <TwoLine $align="center">ENG<br />IN</TwoLine><Space $w={22} />
          <svg width="21" height="18"><path d="M1 7q9.500-9 19 0M4 10.500q6.500-6.500 13 0M7 13.500q3.500-3.500 7 0" fill="none" stroke="#fff" strokeWidth="1.700" /><circle cx="10.500" cy="15.500" r="1.700" fill="#fff" /></svg>
          <Space $w={8} />
          <svg width="20" height="18"><path d="M1 6.500h3.500L9 2v14l-4.500-4.500H1z" fill="none" stroke="#fff" strokeWidth="1.400" /><path d="M11.500 6q2 3 0 6M14 4q3.500 5 0 10" fill="none" stroke="#fff" strokeWidth="1.400" /><path d="M16.500 2q5 7 0 14" fill="none" stroke="#777" strokeWidth="1.300" /></svg>
          <Space $w={10} />
          <svg width="21" height="20"><path d="M9 6h7q2 0 2 2v7q0 2-2 2H6q-2 0-2-2v-1" fill="none" stroke="#fff" strokeWidth="1.600" /><path d="M19 9.500h1.500v4H19z" fill="#fff" /><path d="M6 1q5 5 2 10-2 2-5 1Q-1 8 6 1z" fill="#fff" /></svg>
          <Space $w={21} />
          <TwoLine $align="right" $ls={0.4}>21:32<br />03-07-2025</TwoLine>
        </Tray>
      </Taskbar>
    </Window>
  );
}
